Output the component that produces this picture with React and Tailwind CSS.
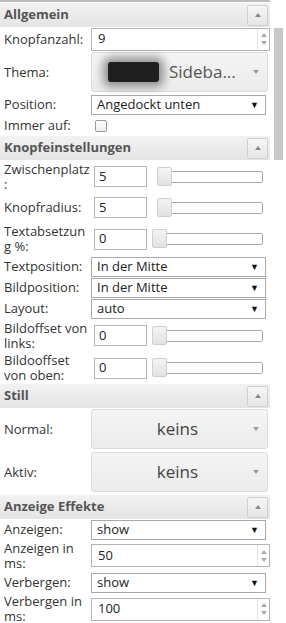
import React from "react";

const font = { fontFamily: "'Open Sans', 'Noto Sans', sans-serif" };

function Header({ title }) {
  return (
    <div className="flex h-[24px] items-center justify-between bg-gradient-to-b from-[#f2f2f2] to-[#e4e4e4] pl-[4px] pr-[2px]">
      <span className="text-[13px] font-bold text-[#555]">{title}</span>
      <button className="flex h-[21px] w-[21px] items-center justify-center rounded-[2px] border border-[#d0d0d0] bg-gradient-to-b from-[#f6f6f6] to-[#e6e6e6]">
        <span className="h-0 w-0 border-x-[3px] border-b-[4px] border-x-transparent border-b-[#888]" />
      </button>
    </div>
  );
}

function Label({ lines, w = "w-[91px]" }) {
  return (
    <div className={`${w} shrink-0 pl-[4px] text-[13px] leading-[15px] text-[#333]`}>
      {lines.map((l) => (
        <div key={l} className="whitespace-nowrap">{l}</div>
      ))}
    </div>
  );
}

function Spinner() {
  return (
    <div className="flex h-full w-[12px] flex-col items-center justify-center gap-[4px] border-l border-[#e2e2e2]">
      <span className="h-0 w-0 border-x-[3px] border-b-[4px] border-x-transparent border-b-[#aaa]" />
      <span className="h-0 w-0 border-x-[3px] border-t-[4px] border-x-transparent border-t-[#aaa]" />
    </div>
  );
}

function NumberRow({ lines, value, h }) {
  return (
    <div className={`flex ${h} items-center`}>
      <Label lines={lines} />
      <div className="flex h-[23px] w-[179px] items-center border border-[#b4b4b4] bg-white">
        <span className="flex-1 pl-[6px] text-[13px] text-[#222]">{value}</span>
        <Spinner />
      </div>
    </div>
  );
}

function SelectRow({ label, value, h = "h-[21px]" }) {
  return (
    <div className={`flex ${h} items-center`}>
      <Label lines={[label]} />
      <div className="flex h-[20px] w-[175px] items-center justify-between border border-[#a9a9a9] bg-white pl-[5px] pr-[6px]">
        <span className="text-[13px] text-[#222]">{value}</span>
        <span className="text-[9px] text-[#111]">▼</span>
      </div>
    </div>
  );
}

function SliderRow({ lines, value, h, sliderGap = "ml-[10px]" }) {
  return (
    <div className={`flex ${h} items-center`}>
      <Label lines={lines} />
      <div className="ml-[3px] flex h-[21px] w-[53px] items-center border border-[#b4b4b4] bg-white pl-[4px] text-[13px] text-[#222]">
        {value}
      </div>
      <div className={`${sliderGap} relative mr-[7px] flex h-[12px] flex-1 items-center rounded-[2px] border border-[#aaa] bg-white`}>
        <span className="absolute -left-px top-[-5px] h-[19px] w-[15px] rounded-[2px] border border-[#cfcfcf] bg-gradient-to-b from-[#f4f4f4] to-[#e2e2e2]" />
      </div>
    </div>
  );
}

function DropButton({ label, h, children }) {
  return (
    <div className={`flex ${h} items-center`}>
      <Label lines={[label]} />
      <div className="flex h-[40px] w-[177px] items-center rounded-[3px] border border-[#dcdcdc] bg-gradient-to-b from-[#f5f5f5] to-[#ebebeb] pr-[8px]">
        <div className="flex flex-1 items-center">{children}</div>
        <span className="h-0 w-0 border-x-[3px] border-t-[4px] border-x-transparent border-t-[#999]" />
      </div>
    </div>
  );
}

export default function App() {
  return (
    <div className="flex h-[623px] w-[286px] overflow-hidden bg-white" style={font}>
      <div className="w-[270px] shrink-0">
        <div className="h-[2px] bg-[#bdbdbd]" />
        <div className="h-[1px]" />
        <Header title="Allgemein" />
        <NumberRow lines={["Knopfanzahl:"]} value="9" h="h-[24px]" />
        <DropButton label="Thema:" h="h-[42px]">
          <span className="ml-[16px] h-[20px] w-[51px] rounded-[3px] bg-[#1e1e1e] shadow-[0_0_10px_5px_rgba(0,0,0,0.4)]" />
          <span className="ml-[10px] text-[17px] text-[#555]">Sideba...</span>
        </DropButton>
        <SelectRow label="Position:" value="Angedockt unten" h="h-[23px]" />
        <div className="flex h-[19px] items-center">
          <Label lines={["Immer auf:"]} />
          <span className="ml-[4px] h-[12px] w-[12px] rounded-[2px] border border-[#999] bg-gradient-to-b from-white to-[#eee]" />
        </div>
        <div className="h-[1px]" />
        <Header title="Knopfeinstellungen" />
        <SliderRow lines={["Zwischenplatz", ":"]} value="5" h="h-[33px]" />
        <SliderRow lines={["Knopfradius:"]} value="5" h="h-[29px]" />
        <SliderRow lines={["Textabsetzun", "g %:"]} value="0" h="h-[34px]" sliderGap="ml-[5px]" />
        <SelectRow label="Textposition:" value="In der Mitte" />
        <SelectRow label="Bildposition:" value="In der Mitte" />
        <SelectRow label="Layout:" value="auto" />
        <SliderRow lines={["Bildoffset von", "links:"]} value="0" h="h-[33px]" sliderGap="ml-[5px]" />
        <SliderRow lines={["Bildooffset", "von oben:"]} value="0" h="h-[32px]" sliderGap="ml-[5px]" />
        <Header title="Still" />
        <DropButton label="Normal:" h="h-[42px]">
          <span className="flex-1 pl-[10px] text-center text-[17px] text-[#444]">keins</span>
        </DropButton>
        <DropButton label="Aktiv:" h="h-[44px]">
          <span className="flex-1 pl-[10px] text-center text-[17px] text-[#444]">keins</span>
        </DropButton>
        <div className="h-[1px]" />
        <Header title="Anzeige Effekte" />
        <SelectRow label="Anzeigen:" value="show" />
        <NumberRow lines={["Anzeigen in", "ms:"]} value="50" h="h-[31px]" />
        <SelectRow label="Verbergen:" value="show" h="h-[23px]" />
        <NumberRow lines={["Verbergen in", "ms:"]} value="100" h="h-[30px]" />
      </div>
      <div className="ml-[4px] mt-[28px] h-[132px] w-[9px] bg-[#c8c8c8]" />
    </div>
  );
}
